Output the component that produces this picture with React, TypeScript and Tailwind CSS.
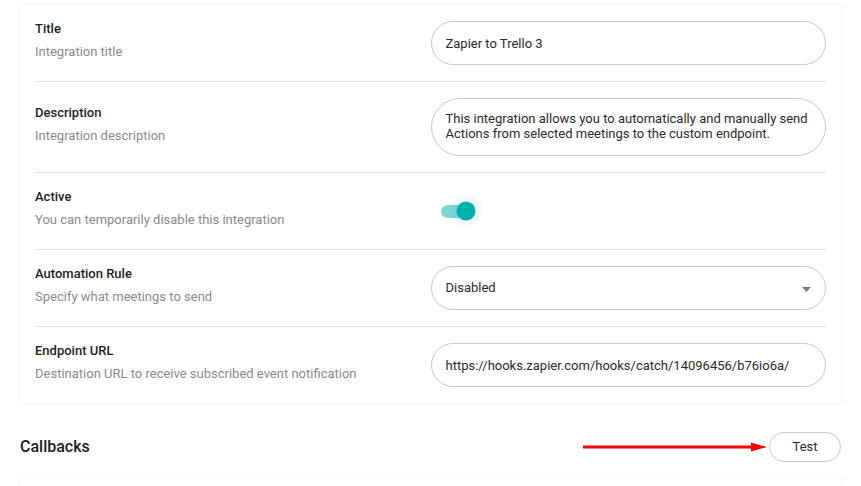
import { useState } from 'react'

interface FieldRowProps {
  label: string
  hint: string
  children: React.ReactNode
  last?: boolean
}

function FieldRow({ label, hint, children, last }: FieldRowProps) {
  return (
    <div className={`grid grid-cols-2 items-center py-4 ${last ? '' : 'border-b border-[#e3e3e3]'}`}>
      <div className="pb-[5px]">
        <div className="text-[13px] leading-4 font-medium text-[#1d1d1f]">{label}</div>
        <div className="mt-[7px] text-[13px] leading-4 text-[#8a8a8a]">{hint}</div>
      </div>
      <div>{children}</div>
    </div>
  )
}

const inputClass =
  'block w-full h-11 rounded-full border border-[#c8c8c8] bg-white px-[14px] text-[13px] text-[#2a2a2a] outline-none'

export default function App() {
  const [formData, setFormData] = useState({
    title: 'Zapier to Trello 3',
    description:
      'This integration allows you to automatically and manually send Actions from selected meetings to the custom endpoint.',
    active: true,
    rule: 'disabled',
    endpoint: 'https://hooks.zapier.com/hooks/catch/14096456/b76io6a/',
  })

  const handleChange = (
    e: React.ChangeEvent<HTMLInputElement | HTMLTextAreaElement | HTMLSelectElement>
  ) => {
    const { name, value } = e.target
    setFormData({ ...formData, [name]: value })
  }

  return (
    <div
      className="min-h-[486px] bg-white px-5 pt-[5px]"
      style={{ fontFamily: 'Roboto, "Liberation Sans", sans-serif' }}
    >
      {/* Settings card */}
      <div className="bg-white px-[15px] shadow-[0_0_4px_rgba(0,0,0,0.07)]">
        <FieldRow label="Title" hint="Integration title">
          <input name="title" value={formData.title} onChange={handleChange} className={inputClass} />
        </FieldRow>

        <FieldRow label="Description" hint="Integration description">
          <textarea
            name="description"
            value={formData.description}
            onChange={handleChange}
            rows={2}
            className="block h-[58px] w-full resize-none rounded-[30px] border border-[#c8c8c8] bg-white px-[14px] pt-[12px] text-[13px] leading-[15px] text-[#2a2a2a] outline-none"
          />
        </FieldRow>

        <FieldRow label="Active" hint="You can temporarily disable this integration">
          <div className="flex h-11 items-center pl-[10px]">
            <button
              type="button"
              onClick={() => setFormData({ ...formData, active: !formData.active })}
              className="relative h-[13px] w-[30px] rounded-full bg-[#7fd6d3]"
            >
              <span className="absolute top-1/2 left-[25px] h-8 w-8 -translate-x-1/2 -translate-y-1/2 rounded-full bg-[#00b1ab]/[0.06]" />
              <span className="absolute top-1/2 left-[25px] h-[19px] w-[19px] -translate-x-1/2 -translate-y-1/2 rounded-full bg-[#00b1ab]" />
            </button>
          </div>
        </FieldRow>

        <FieldRow label="Automation Rule" hint="Specify what meetings to send">
          <div className="relative">
            <select
              name="rule"
              value={formData.rule}
              onChange={handleChange}
              className={`${inputClass} appearance-none`}
            >
              <option value="disabled">Disabled</option>
              <option value="all">All meetings</option>
            </select>
            <svg
              className="pointer-events-none absolute top-[21px] right-[15px]"
              width="9"
              height="5"
              viewBox="0 0 9 5"
            >
              <path d="M0 0h9L4.5 5z" fill="#7a7a7a" />
            </svg>
          </div>
        </FieldRow>

        <FieldRow
          label="Endpoint URL"
          hint="Destination URL to receive subscribed event notification"
          last
        >
          <input
            name="endpoint"
            value={formData.endpoint}
            onChange={handleChange}
            className={inputClass}
          />
        </FieldRow>
      </div>

      {/* Callbacks */}
      <div className="mt-[29px] flex items-center justify-between">
        <h2 className="text-[16px] font-medium text-[#1d1d1f]">Callbacks</h2>
        <div className="flex items-center">
          <svg width="184" height="10" viewBox="0 0 184 10" className="mr-[2px]">
            <rect x="0" y="3.5" width="170" height="3" fill="#ff0000" />
            <path d="M168 0.5L184 5L168 9.5z" fill="#ff0000" />
          </svg>
          <button
            type="button"
            className="h-[30px] w-[72px] rounded-full border border-[#c8c8c8] bg-white text-[13px] text-[#2a2a2a]"
          >
            Test
          </button>
        </div>
      </div>

      <div className="mt-[14px] h-6 bg-white shadow-[0_0_4px_rgba(0,0,0,0.07)]" />
    </div>
  )
}
